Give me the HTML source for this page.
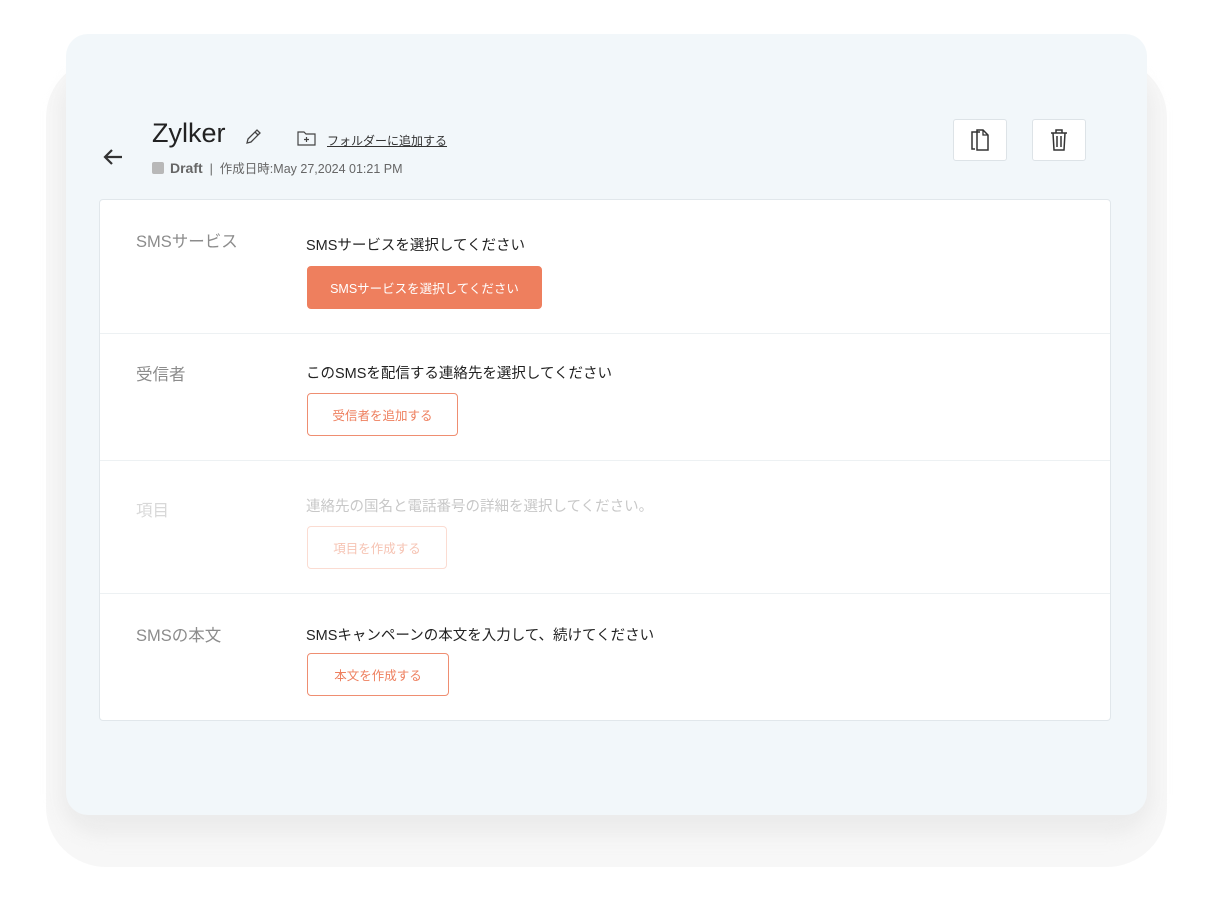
<!DOCTYPE html>
<html><head><meta charset="utf-8"><style>
*{box-sizing:border-box;margin:0;padding:0}
body{width:1214px;height:914px;background:#fff;position:relative;overflow:hidden;font-family:"Liberation Sans","Noto Sans CJK JP",sans-serif}
.sh{position:absolute;left:46px;top:58px;width:1121px;height:809px;background:#f7f7f7;border-radius:60px}
.sh2{position:absolute;left:60px;top:70px;width:1093px;height:765px;background:#ececec;border-radius:40px;filter:blur(8px)}
.panel{position:absolute;left:66px;top:34px;width:1081px;height:781px;background:#f2f7fa;border-radius:22px}
.a{position:absolute}
.title{left:152px;top:118px;font-size:27px;color:#222}
.meta{left:152px;top:158px;font-size:12.5px;color:#666;display:flex;align-items:center}
.sq{width:12px;height:12px;background:#b8b8b8;border-radius:2px;margin-right:6px}
.ib{width:54px;height:42px;background:#fff;border:1px solid #dde3e7;border-radius:3px;display:flex;align-items:center;justify-content:center}
.card{left:99px;top:199px;width:1012px;height:522px;background:#fff;border:1px solid #e1e7eb;border-radius:4px}
.row{position:absolute;left:0;width:1010px;border-bottom:1px solid #edf1f3}
.lbl{position:absolute;left:36px;font-size:16.5px;color:#8c8c8c}
.txt{position:absolute;left:206px;font-size:14.5px;color:#222}
.btn{position:absolute;left:207px;height:43px;border:1px solid #ef8e71;border-radius:4px;color:#ee7f5e;font-size:12.5px;display:flex;align-items:center;justify-content:center}
</style></head><body>
<div class="sh"></div><div class="sh2"></div>
<div class="panel"></div>
<svg class="a" style="left:103px;top:148px" width="20" height="18" viewBox="0 0 20 18"><path d="M19 9H3M9 2L2 9l7 7" stroke="#333" stroke-width="2.2" fill="none"/></svg>
<div class="a title">Zylker</div>
<svg class="a" style="left:244px;top:128px" width="18" height="18" viewBox="0 0 18 18"><path d="M3 15l1-4 9-9 3 3-9 9-4 1zM11 4l3 3" stroke="#444" stroke-width="1.3" fill="none"/></svg>
<svg class="a" style="left:297px;top:130px" width="19" height="16" viewBox="0 0 19 16"><path d="M1 2h6l2 2h9v11H1z" stroke="#444" stroke-width="1.2" fill="none"/><path d="M9.5 7v5M7 9.5h5" stroke="#444" stroke-width="1.2"/></svg>
<div class="a" style="left:327px;top:132px;font-size:12px;color:#333;text-decoration:underline">フォルダーに追加する</div>
<div class="a meta"><span class="sq"></span><b style="font-size:14px;color:#666">Draft</b>&nbsp;&nbsp;|&nbsp;&nbsp;作成日時:May 27,2024 01:21 PM</div>
<div class="a ib" style="left:953px;top:119px"><svg width="26" height="26" viewBox="0 0 26 26"><path d="M8 22H5V5h8M10 3h6l5 5v15H10z" stroke="#333" stroke-width="1.5" fill="none"/><path d="M16 3v5h5" stroke="#333" stroke-width="1.3" fill="none"/></svg></div>
<div class="a ib" style="left:1032px;top:119px"><svg width="22" height="26" viewBox="0 0 22 26"><path d="M3 6h16M8 6V3h6v3M5 6l1 17h10l1-17M9 9v11M13 9v11" stroke="#333" stroke-width="1.5" fill="none"/></svg></div>
<div class="a card">
 <div class="row" style="top:0;height:134px">
  <div class="lbl" style="top:28px">SMSサービス</div>
  <div class="txt" style="top:34px">SMSサービスを選択してください</div>
  <div class="btn" style="top:66px;width:235px;background:#ee7f5e;border-color:#ee7f5e;color:#fff">SMSサービスを選択してください</div>
 </div>
 <div class="row" style="top:134px;height:127px">
  <div class="lbl" style="top:27px">受信者</div>
  <div class="txt" style="top:28px">このSMSを配信する連絡先を選択してください</div>
  <div class="btn" style="top:59px;width:151px">受信者を追加する</div>
 </div>
 <div class="row" style="top:261px;height:133px">
  <div class="lbl" style="top:36px;color:#d8d8d8">項目</div>
  <div class="txt" style="top:34px;color:#c8c8c8">連絡先の国名と電話番号の詳細を選択してください。</div>
  <div class="btn" style="top:65px;width:140px;border-color:#fbdcd2;color:#f6c3b3">項目を作成する</div>
 </div>
 <div class="row" style="top:394px;height:127px;border-bottom:none">
  <div class="lbl" style="top:28px">SMSの本文</div>
  <div class="txt" style="top:30px">SMSキャンペーンの本文を入力して、続けてください</div>
  <div class="btn" style="top:59px;width:142px">本文を作成する</div>
 </div>
</div>
</body></html>
